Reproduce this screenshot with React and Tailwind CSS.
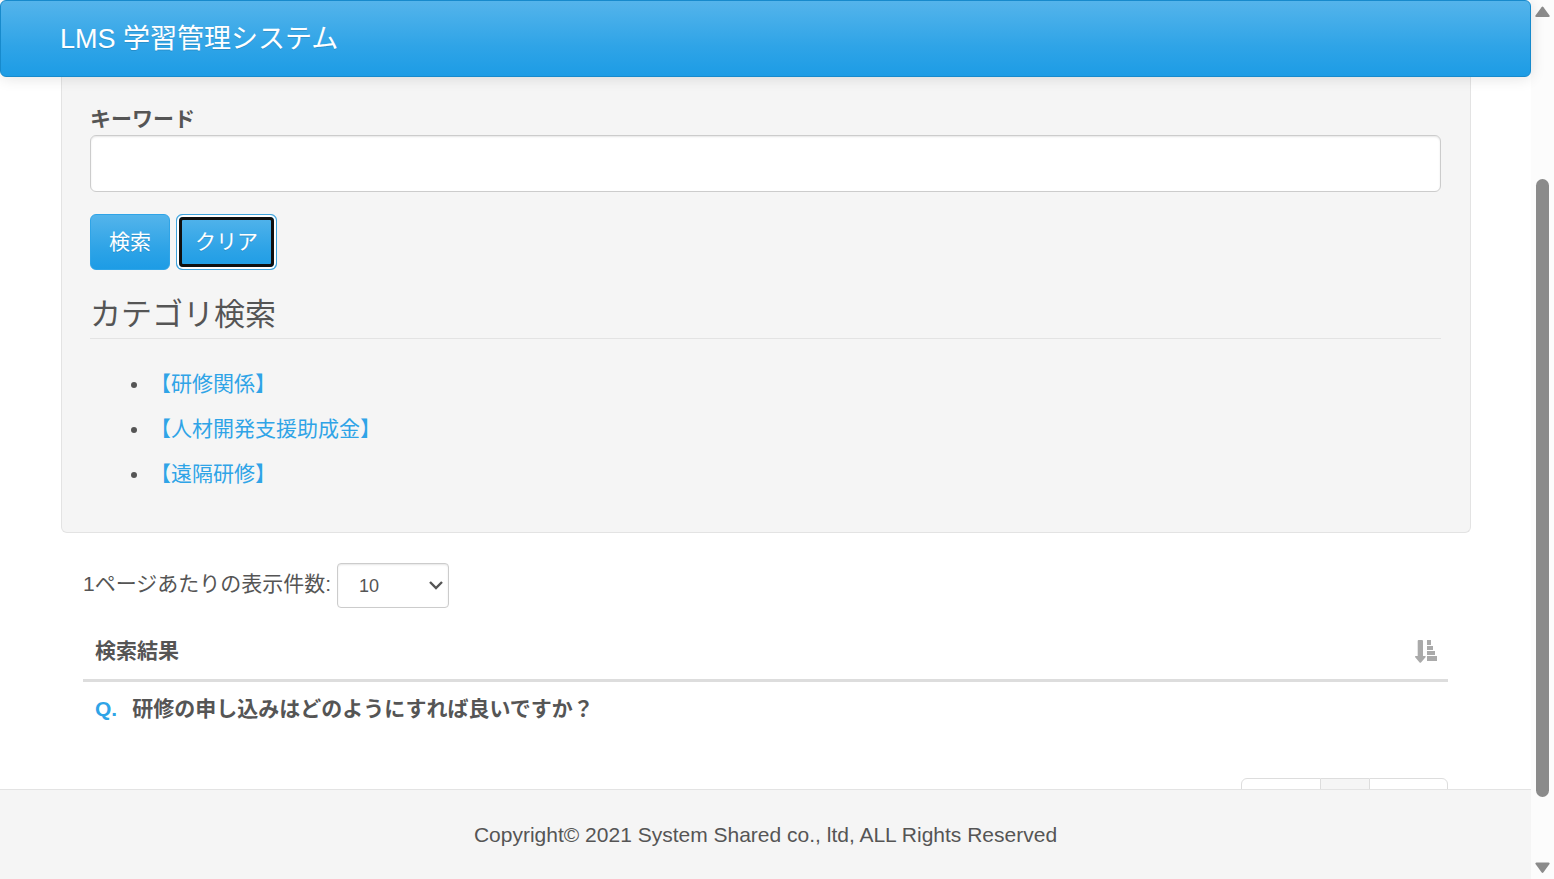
import React from "react";

const categories = ["【研修関係】", "【人材開発支援助成金】", "【遠隔研修】"];

function Header() {
  return (
    <header className="relative z-10 flex h-[77px] shrink-0 items-center rounded-md border border-[#178acc] bg-[linear-gradient(#54b4eb,#2fa4e7_60%,#1d9ce5)] px-[59px] shadow-[0_1px_15px_rgba(0,0,0,0.12)]">
      <a href="#" className="text-[27px] leading-10 text-white [text-shadow:0_1px_0_rgba(0,0,0,0.15)]">
        LMS 学習管理システム
      </a>
    </header>
  );
}

function SearchPanel() {
  return (
    <section className="rounded-b-md border border-t-0 border-[#e3e3e3] bg-[#f5f5f5] pt-[27px] pr-[29px] pb-9 pl-7">
      <form onSubmit={(e) => e.preventDefault()}>
        <label htmlFor="keyword" className="block pb-[2px] font-bold leading-[29px]">
          キーワード
        </label>
        <input
          id="keyword"
          type="text"
          className="block h-[57px] w-full rounded-md border border-[#ccc] bg-white px-4 shadow-[inset_0_1px_2px_rgba(0,0,0,0.1)] outline-none"
        />
        <div className="mt-[22px] flex gap-[6px]">
          <button
            type="submit"
            className="h-14 rounded-md border border-[#2fa4e7] bg-[linear-gradient(#54b4eb,#2fa4e7_60%,#1d9ce5)] px-[18px] text-white [text-shadow:0_1px_0_rgba(0,0,0,0.15)]"
          >
            検索
          </button>
          <button
            type="button"
            className="relative h-14 rounded-md border border-[#3fa3dc] bg-[linear-gradient(#54b4eb,#2fa4e7_60%,#1d9ce5)] px-[18px] text-white [text-shadow:0_1px_0_rgba(0,0,0,0.15)] before:absolute before:inset-[2px] before:rounded before:border-[3px] before:border-[#101010] before:shadow-[0_0_0_2px_#fff]"
          >
            クリア
          </button>
        </div>
      </form>
      <h2 className="mt-[22px] border-b border-[#e3e3e3] text-[31px] leading-[46px]">カテゴリ検索</h2>
      <ul className="mt-[22px] list-disc pl-[60px] leading-[45px]">
        {categories.map((name) => (
          <li key={name}>
            <a href="#" className="text-[#2fa4e7]">
              {name}
            </a>
          </li>
        ))}
      </ul>
    </section>
  );
}

function SortIcon() {
  return (
    <svg width="22" height="23" viewBox="0 0 22 23" fill="#aaa" aria-hidden="true">
      <path d="M3.500 0h3.600q.9 0 .9.900V16h2q1.200.2.500 1.200l-4.500 5.200q-.7.700-1.400 0L.2 17.200q-.7-1 .5-1.200H2.700V.9q0-.9.800-.9z" />
      <path d="M12 0h4v5h-4zM12 6h6v4h-6zM12 11h8v4h-8zM12 16h10v5h-10z" />
    </svg>
  );
}

function Results() {
  return (
    <section className="pt-[30px] pr-[23px] pl-[22px]">
      <div className="flex items-center gap-[6px]">
        <label htmlFor="page-size" className="pb-1">
          1ページあたりの表示件数:
        </label>
        <div className="relative">
          <select
            id="page-size"
            defaultValue="10"
            className="block h-[45px] w-28 appearance-none rounded border border-[#ccc] bg-white pl-[21px] text-[18px] shadow-[inset_0_1px_2px_rgba(0,0,0,0.1)]"
          >
            <option>10</option>
            <option>25</option>
            <option>50</option>
          </select>
          <svg
            className="pointer-events-none absolute top-[17px] right-1.5"
            width="14"
            height="10"
            viewBox="0 0 14 10"
            fill="none"
            stroke="#555"
            strokeWidth="2.400"
            aria-hidden="true"
          >
            <path d="M1 2l6 6 6-6" />
          </svg>
        </div>
      </div>
      <table className="mt-[13px] w-full border-collapse text-left">
        <thead>
          <tr className="border-b-[3px] border-[#ddd]">
            <th className="h-[59px] px-3 pt-[3px] font-bold">
              <div className="flex items-center justify-between">
                検索結果
                <button type="button" aria-label="並べ替え" className="mr-[-1px]">
                  <SortIcon />
                </button>
              </div>
            </th>
          </tr>
        </thead>
        <tbody>
          <tr>
            <td className="h-[53px] px-3 pt-[3px] font-bold">
              <span className="mr-[15px] text-[#2fa4e7]">Q.</span>
              研修の申し込みはどのようにすれば良いですか？
            </td>
          </tr>
        </tbody>
      </table>
      <nav className="mt-[45px] flex justify-end">
        <button type="button" aria-label="前へ" className="h-14 w-20 rounded-l-md border border-[#ddd]" />
        <button type="button" aria-label="1" className="h-14 w-12 border-t border-[#ddd] bg-[#f5f5f5]" />
        <button type="button" aria-label="次へ" className="h-14 w-[79px] rounded-r-md border border-[#ddd]" />
      </nav>
    </section>
  );
}

function Scrollbar() {
  return (
    <div className="flex w-[23px] shrink-0 flex-col items-center bg-[#fcfcfc] pb-px" aria-hidden="true">
      <svg className="shrink-0" width="23" height="24" viewBox="0 0 23 24" fill="#8b8b8b">
        <path d="M10.500 7.200q1-1.200 2 0l6 8.300q.8 1.500-1 1.500h-12q-1.800 0-1-1.500z" />
      </svg>
      <div className="flex-[155]" />
      <div className="w-[13px] flex-[618] rounded-full bg-[#8b8b8b]" />
      <div className="flex-[57]" />
      <svg className="shrink-0" width="23" height="24" viewBox="0 0 23 24" fill="#8b8b8b">
        <path d="M10.500 18.300q1 1.200 2 0l6-8.300q.8-1.500-1-1.500h-12q-1.800 0-1 1.500z" />
      </svg>
    </div>
  );
}

export default function App() {
  return (
    <div className="flex h-screen bg-white font-['Liberation_Sans','Noto_Sans_CJK_JP',sans-serif] text-[21px] leading-[30px] text-[#555]">
      <div className="flex min-w-0 flex-1 flex-col">
        <Header />
        <main className="min-h-0 flex-1 overflow-hidden pr-[60px] pl-[61px]">
          <SearchPanel />
          <Results />
        </main>
        <footer className="flex h-[90px] shrink-0 items-center justify-center border-t border-[#e3e3e3] bg-[#f5f5f5]">
          Copyright© 2021 System Shared co., ltd, ALL Rights Reserved
        </footer>
      </div>
      <Scrollbar />
    </div>
  );
}
